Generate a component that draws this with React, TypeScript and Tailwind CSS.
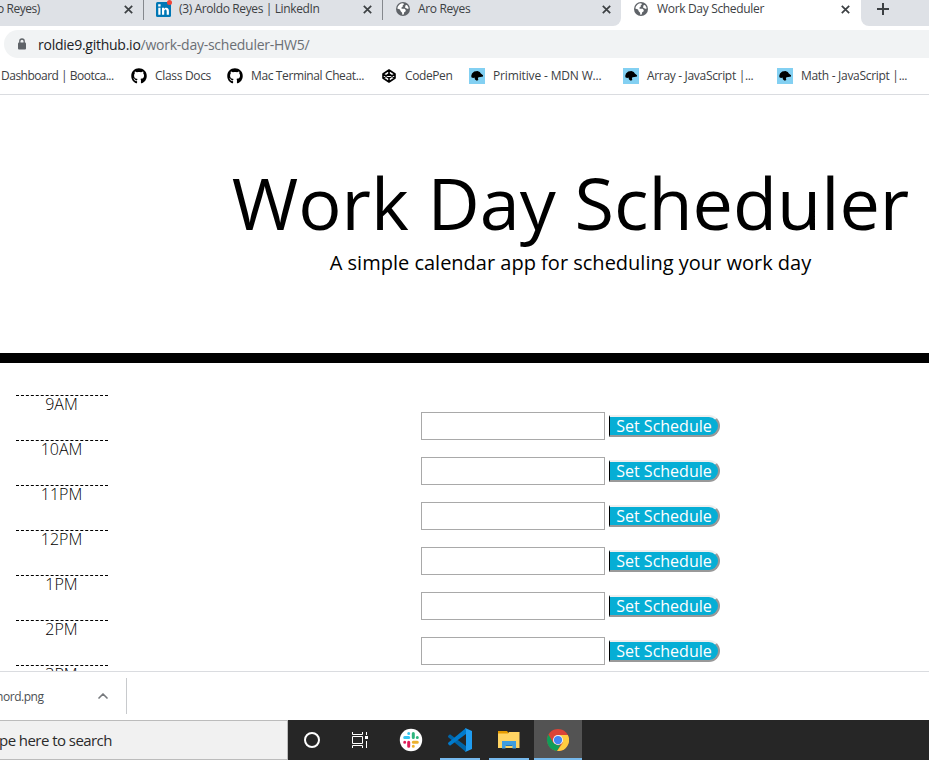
import type { ReactNode } from 'react';
import { FaGithub } from 'react-icons/fa';
import { ChevronUp } from 'lucide-react';

const Close = () => (
  <svg width="9" height="9" viewBox="0 0 9 9" className="shrink-0" stroke="#3c4043" strokeWidth="1.7">
    <path d="M.8 .8 8.2 8.2M8.2 .8 .8 8.2" />
  </svg>
);

const Globe = () => (
  <svg width="14" height="14" viewBox="0 0 14 14" className="ml-px mr-[8px] shrink-0">
    <circle cx="7" cy="7" r="7" fill="#5f6368" />
    <path
      fill="#fff"
      d="M7.200 1.300 8 2.200 6.700 3.500v1.300L5.300 5.700l.4 1h3l1 1.300v1.300l-1.500.9-.5 2.300-1.400.2-.2-2L4.700 9.300 4 7.500 1.300 6.600A5.800 5.800 0 0 1 7.200 1.300ZM9.500 3.200l1.500-.3 1.500 2.500-.2 1.600-1.600-.6-1.700-.9Z"
    />
  </svg>
);

const LinkedIn = () => (
  <svg width="15" height="15" viewBox="0 0 15 15">
    <rect width="15" height="15" rx="1.500" fill="#0077b5" />
    <path fill="#fff" d="M2.300 5.800h2.200v7H2.300zM2.200 2.300h2.400v2.200H2.200zM6 5.800h2.100v1c1-1.700 4.800-1.700 4.800 1.900v4.100h-2.200V9.200c0-2.200-2.500-2-2.500 0v3.600H6z" />
  </svg>
);

const Lock = () => (
  <svg width="10" height="13" viewBox="0 0 10 13">
    <rect x="1" y="4.500" width="8" height="7" rx="1" fill="#5f6368" />
    <path d="M2.800 5V3.200a2.200 2.200 0 0 1 4.400 0V5" fill="none" stroke="#5f6368" strokeWidth="1.300" />
  </svg>
);

const CodePenMark = () => (
  <svg width="14" height="14" viewBox="0 0 14 14" fill="none" stroke="#000" strokeWidth="1.600" strokeLinejoin="round">
    <path d="M7 1 13 5v4l-6 4-6-4V5zM7 1v4M7 9v4M1 5l6 4 6-4M1 9l6-4 6 4" />
  </svg>
);

function Tab({ className, icon, label, tracking }: { className: string; icon?: ReactNode; label: string; tracking: string }) {
  return (
    <div className={`flex h-[26px] shrink-0 items-center pb-2 ${className}`}>
      {icon}
      <span className={`whitespace-nowrap text-[12px] leading-4 text-[#3c4043] ${tracking}`}>{label}</span>
      <span className="ml-auto"><Close /></span>
    </div>
  );
}

const MdnIcon = () => (
  <svg width="16" height="16" viewBox="0 0 16 16">
    <path fill="#83d0f2" d="M0 0h16v16H0z" />
    <path d="M2.200 8 3 5.500 5.200 3.600 8.500 3l2.300 1 1 1.500L14 7.200v1.300l-2.500.5-2 .3-.6 1 .4 1.700-1.500.8L6 11.500 5.500 9.600l-1.200.4L2.600 9.600z" />
  </svg>
);

function Bookmark({ width, icon, label, tracking }: { width: string; icon: ReactNode; label: string; tracking: string }) {
  return (
    <div className={`flex shrink-0 items-center gap-2 ${width}`}>
      <span className="flex w-4 shrink-0 justify-center">{icon}</span>
      <span className={`whitespace-nowrap ${tracking}`}>{label}</span>
    </div>
  );
}

const hours = ['9AM', '10AM', '11PM', '12PM', '1PM', '2PM', '3PM'];

const Slack = () => (
  <svg width="24" height="24" viewBox="0 0 24 24">
    <circle cx="12" cy="12" r="11.2" fill="#fff" />
    <g strokeWidth="3" strokeLinecap="round">
      <path stroke="#36c5f0" d="M5.7 9.5h4M9.7 5.5h0" />
      <path stroke="#2eb67d" d="M14.3 5.5v4M18.3 9.5h0" />
      <path stroke="#ecb22e" d="M14.3 14.3h4M14.3 18.3h0" />
      <path stroke="#e01e5a" d="M9.7 14.3v4M5.7 14.3h0" />
    </g>
  </svg>
);

const Code = () => (
  <svg width="24" height="24" viewBox="0 0 24 24">
    <path fill="#0065a9" d="m0 8 2-1.7L18 18v6L.2 9.2z" />
    <path fill="#007acc" d="m0 16 2 1.7L18 6V0L.2 14.8z" />
    <path fill="#1f9cf0" d="M17.8.2 24 3v18l-6.2 2.8-.8-.8 1-.5v-21l-1-.5z" />
  </svg>
);

const Folder = () => (
  <svg width="22" height="20" viewBox="0 0 22 20">
    <path fill="#e59b00" d="M0 1h9l1.500 2H21v4H0z" />
    <path fill="#ffd463" d="M0 3.500h10l1-1.500h10.500v16H0z" />
    <path fill="#3f9ddf" d="M4 11h14v7.500h-3.500V15h-7v3.500H4z" />
    <path fill="#2476b8" d="M7.500 15h7v1h-7z" />
  </svg>
);

const Chrome = () => (
  <svg width="22" height="22" viewBox="0 0 24 24">
    <circle cx="12" cy="12" r="12" fill="#db4437" />
    <path fill="#0f9d58" d="M1.600 6 6.800 15 12 18l3-1-4 7A12 12 0 0 1 1.600 6z" />
    <path fill="#ffcd40" d="M12 6.500h10.700A12 12 0 0 1 11 24l6.200-9z" />
    <circle cx="12" cy="12" r="5.500" fill="#f1f1f1" />
    <circle cx="12" cy="12" r="4.500" fill="#4285f4" />
  </svg>
);

function TaskItem({ className, children }: { className: string; children: ReactNode }) {
  return <div className={`flex h-10 shrink-0 items-center justify-center ${className}`}>{children}</div>;
}

export default function App() {
  return (
    <div className="flex h-[760px] w-[929px] flex-col overflow-hidden bg-white font-['Open_Sans',sans-serif] text-black">
      <div className="flex h-[26px] shrink-0 bg-white">
        <Tab className="w-[143px] bg-[#dee1e6] pr-[10px]" label="o Reyes)" tracking="-ml-[3px] tracking-[-0.45px]" />
        <div className="flex w-px bg-[#dee1e6]"><i className="h-5 w-px bg-[#85888d]" /></div>
        <Tab
          className="w-[238px] bg-[#dee1e6] pl-[11px] pr-[10px]"
          icon={
            <span className="relative mr-2 flex size-4 shrink-0 items-center justify-center">
              <LinkedIn />
              <i className="absolute -right-px -top-px size-[5px] rounded-full bg-[#f04438]" />
            </span>
          }
          label="(3) Aroldo Reyes | LinkedIn"
          tracking="tracking-[-0.38px]"
        />
        <div className="flex w-px bg-[#dee1e6]"><i className="h-5 w-px bg-[#85888d]" /></div>
        <Tab
          className="w-[238px] rounded-br-[8px] bg-[#dee1e6] pl-[12px] pr-[10px]"
          icon={<Globe />}
          label="Aro Reyes"
          tracking="tracking-[-0.35px]"
        />
        <Tab
          className="w-[240px] bg-white pl-[12px] pr-[11px]"
          icon={<Globe />}
          label="Work Day Scheduler"
          tracking="ml-px tracking-[-0.33px]"
        />
        <div className="flex flex-1 rounded-bl-[8px] bg-[#dee1e6] pl-4 pt-[3px]">
          <svg width="12" height="12" viewBox="0 0 12 12" stroke="#3c4043" strokeWidth="2"><path d="M6 0v12M0 6h12" /></svg>
        </div>
      </div>

      <div className="ml-1 mt-1 flex h-7 shrink-0 items-center rounded-l-full bg-[#f1f3f4] pl-[13px]">
        <Lock />
        <span className="ml-[11px] whitespace-nowrap text-[14px] tracking-[-0.25px] text-[#202124]">
          roldie9.github.io<span className="text-[#6b6f74]">/work-day-scheduler-HW5/</span>
        </span>
      </div>

      <div className="flex h-[37px] shrink-0 items-center border-b border-[#dadce0] text-[12px] text-[#3c4043]">
        <span className="w-[131px] shrink-0 whitespace-nowrap pl-px tracking-[-0.5px]">Dashboard | Bootca...</span>
        <Bookmark width="w-[96px]" icon={<FaGithub size={16} className="text-black" />} label="Class Docs" tracking="tracking-[-0.32px]" />
        <Bookmark width="w-[154px]" icon={<FaGithub size={16} className="text-black" />} label="Mac Terminal Cheat..." tracking="tracking-[-0.38px]" />
        <Bookmark width="w-[88px]" icon={<CodePenMark />} label="CodePen" tracking="tracking-[-0.4px]" />
        <Bookmark width="w-[154px]" icon={<MdnIcon />} label="Primitive - MDN W..." tracking="tracking-[-0.15px]" />
        <Bookmark width="w-[154px]" icon={<MdnIcon />} label="Array - JavaScript |..." tracking="tracking-[-0.32px]" />
        <Bookmark width="w-[140px]" icon={<MdnIcon />} label="Math - JavaScript |..." tracking="tracking-[-0.3px]" />
      </div>

      <main className="flex h-[576px] shrink-0 flex-col overflow-hidden">
        <header className="flex h-[268px] shrink-0 flex-col border-b-[10px] border-black pl-[212px] pt-[60px] text-center">
          <h1 className="whitespace-nowrap text-[72px] leading-[95px]">Work Day Scheduler</h1>
          <p className="whitespace-nowrap text-[20px] leading-[26px]">A simple calendar app for scheduling your work day</p>
        </header>
        <div className="mt-8 pl-4">
          {hours.map((hour) => (
            <div key={hour} className="flex h-[45px]">
              <div className="w-[92px] border-t border-dashed border-black pr-px text-center text-[16px] font-[350] leading-4">{hour}</div>
              <div className="ml-[313px] flex h-[45px] pt-[17px]">
                <input className="h-7 w-[184px] border border-[#a9a9a9] bg-white px-1 outline-none" />
                <button className="ml-1 mt-[3px] flex h-[22px] w-[111px] items-center justify-center whitespace-nowrap rounded-r-[11px] border-y-2 border-l border-r-2 border-b-[#999] border-l-black border-r-[#999] border-t-[#efefef] bg-[#06aed5] text-[16px] leading-4 text-white">
                  Set Schedule
                </button>
              </div>
            </div>
          ))}
        </div>
      </main>

      <div className="flex h-[49px] shrink-0 border-t border-[#dadce0]">
        <div className="mt-[6px] flex h-9 w-[127px] items-center border-r border-[#c8cacd] text-[12px] text-[#4b4f53]">
          <span className="-ml-[4px] w-[101px] pt-[2px] tracking-[-0.45px]">nord.png</span>
          <ChevronUp size={16} strokeWidth={2.5} className="-ml-[2px] text-[#76797d]" />
        </div>
      </div>

      <div className="flex h-10 shrink-0 bg-[#262626]">
        <div className="flex w-[288px] shrink-0 items-center border-y border-r border-[#bcbcbc] bg-[#f1f1f1] text-[15px] text-[#2b2b2b]">
          <span className="-ml-px whitespace-nowrap tracking-[-0.55px]">pe here to search</span>
        </div>
        <TaskItem className="w-12"><i className="size-4 rounded-full border-2 border-white" /></TaskItem>
        <TaskItem className="w-12">
          <svg width="17" height="16" viewBox="0 0 17 16" fill="none" stroke="#fff">
            <path d="M.5 0v2.500h10V0M.5 16v-2.500h10V16M.5 4.500h10v7H.5zM14.500 0v3M14.500 9v7" />
            <path fill="#fff" stroke="none" d="M13 4h3v3h-3z" />
          </svg>
        </TaskItem>
        <TaskItem className="w-[54px]"><Slack /></TaskItem>
        <TaskItem className="ml-[2px] w-10 border-b-2 border-[#76b9ed] pt-[2px]"><Code /></TaskItem>
        <TaskItem className="ml-[9px] w-10 border-b-2 border-[#76b9ed] pt-[2px]"><Folder /></TaskItem>
        <TaskItem className="ml-[5px] w-12 border-b-2 border-[#76b9ed] bg-[#535353] pt-[2px]"><Chrome /></TaskItem>
      </div>
    </div>
  );
}
